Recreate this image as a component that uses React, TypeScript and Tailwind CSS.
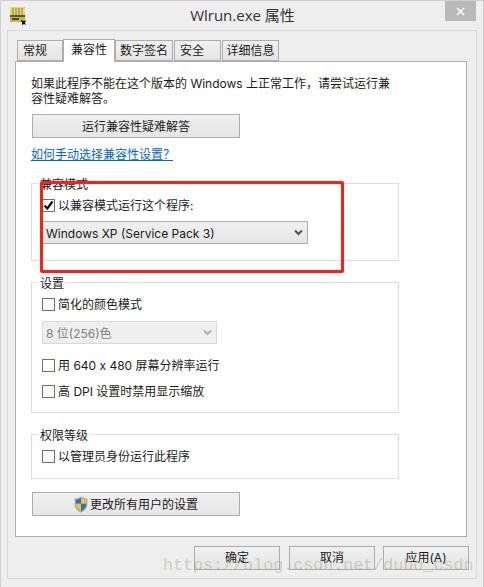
import React from 'react';

const fontStack = { fontFamily: 'Inter, "Noto Sans CJK SC", sans-serif' };

const tabs = [
    { label: '常规', cls: 'w-[46px] ml-[1px] justify-start pl-[5px]' },
    { label: '兼容性', cls: 'w-[52px] justify-center', active: true },
    { label: '数字签名', cls: 'w-[58px] justify-center' },
    { label: '安全', cls: 'w-[47px] ml-[1px] justify-start pl-[5px]' },
    { label: '详细信息', cls: 'w-[57px] ml-[1px] justify-center' },
];

const AppIcon = () => (
    <svg width="17" height="18" viewBox="0 0 17 18" className="block">
        <rect x="0" y="0" width="15" height="15" fill="#e8e04a" />
        <rect x="2" y="1" width="2" height="7" fill="#7fc06a" />
        <rect x="5" y="1" width="2" height="7" fill="#e88a8a" />
        <rect x="8" y="1" width="2" height="7" fill="#8ab86a" />
        <rect x="11" y="1" width="2" height="7" fill="#e88a8a" />
        <rect x="0" y="8" width="15" height="2" fill="#555" />
        <rect x="0" y="10" width="15" height="5" fill="#c8b838" />
        <rect x="2" y="11" width="7" height="2" fill="#444" />
        <path d="M11 13l3 1 2-1-1 3 1 2-2-1-2 1 0-2z" fill="#111" />
    </svg>
);

const ShieldIcon = () => (
    <svg width="14" height="17" viewBox="0 0 14 17" className="block">
        <path d="M7 .5C5 2 3 2.500 .7 2.500V8.500C.7 12 3.500 15 7 16.500 10.500 15 13.300 12 13.300 8.500V2.500C11 2.500 9 2 7 .5Z" fill="#9aa4ae" />
        <path d="M7 2C5.500 3 3.800 3.600 2 3.700V7.800H7Z" fill="#2f6fc4" />
        <path d="M7 2C8.500 3 10.200 3.600 12 3.700V7.800H7Z" fill="#f2c530" />
        <path d="M2 7.800H7V15C4.200 13.600 2 11.200 2 8.500Z" fill="#f2c530" />
        <path d="M12 7.800H7V15C9.800 13.600 12 11.200 12 8.500Z" fill="#2f6fc4" />
    </svg>
);

const Chevron = ({ color }: { color: string }) => (
    <svg width="9" height="7" viewBox="0 0 9 7" className="block">
        <path d="M1 1.500L4.500 5 8 1.500" fill="none" stroke={color} strokeWidth="2" />
    </svg>
);

const Checkbox = ({ label, checked, className }: { label: string; checked?: boolean; className?: string }) => (
    <div className={`flex items-center h-[14px] ${className ?? ''}`}>
        <div className="w-[13px] h-[13px] border border-[#707070] bg-white flex items-center justify-center shrink-0">
            {checked && (
                <svg width="11" height="11" viewBox="0 0 11 11" className="block">
                    <path d="M1.500 5.500L4.300 8.500 9.500 1.500" fill="none" stroke="#111" strokeWidth="2.200" />
                </svg>
            )}
        </div>
        <span className="ml-[3px] pt-[2px] whitespace-nowrap">{label}</span>
    </div>
);

const Group = ({ title, className, children }: { title: string; className: string; children: React.ReactNode }) => (
    <fieldset className={`border border-[#dcdcdc] ml-[15px] w-[368px] px-[10px] ${className}`}>
        <legend className="ml-[-4px] px-[2px] leading-[17px] h-[14px]">{title}</legend>
        {children}
    </fieldset>
);

const PushButton = ({ children, className }: { children: React.ReactNode; className: string }) => (
    <div className={`flex items-center justify-center border border-[#adadad] bg-gradient-to-b from-[#f0f0f0] to-[#e5e5e5] ${className}`}>
        {children}
    </div>
);

export default function App() {
    return (
        <div className="relative w-[484px] h-[587px] overflow-hidden bg-[#eeeeee] border-t border-x border-[#d0d0d0] text-[12px] text-[#1a1a1a]" style={fontStack}>
            <header className="relative flex items-center justify-center h-[29px]">
                <div className="absolute left-[9px] top-[6px]"><AppIcon /></div>
                <h1 className="text-[15px] font-normal text-[#333] pl-[1px]" style={{ fontFamily: '"Open Sans", "Noto Sans CJK SC", sans-serif' }}>Wlrun.exe 属性</h1>
                <div className="absolute right-[7px] top-0 w-[31px] h-[20px] bg-[#b9b9b9] flex items-center justify-center">
                    <svg width="9" height="9" viewBox="0 0 9 9" className="block">
                        <path d="M1 1L8 8M8 1L1 8" stroke="#fff" strokeWidth="1.600" />
                    </svg>
                </div>
            </header>

            <div className="ml-[6px] w-[470px] h-[549px] border border-[#d8d8d8] pt-[8px] px-[7px]">
                <div className="flex items-end h-[22px] relative z-10 ml-[1px]">
                    {tabs.map((t) => (
                        <div
                            key={t.label}
                            className={
                                t.active
                                    ? `${t.cls} h-[23px] pb-[3px] flex items-center bg-white border border-b-0 border-[#adadad] -mb-[1px]`
                                    : `${t.cls} h-[21px] flex items-center bg-gradient-to-b from-[#f0f0f0] to-[#e5e5e5] border border-[#adadad]`
                            }
                        >
                            {t.label}
                        </div>
                    ))}
                </div>

                <main className="w-[452px] h-[476px] border border-[#adadad] bg-white">
                    <p className="ml-[15px] mt-[14px] w-[366px] leading-[15px]">
                        如果此程序不能在这个版本的 Windows 上正常工作，请尝试运行兼容性疑难解答。
                    </p>
                    <PushButton className="ml-[16px] mt-[8px] w-[208px] h-[24px] pt-[2px]">运行兼容性疑难解答</PushButton>
                    <a className="block ml-[15px] mt-[9px] leading-[15px] text-[#0066cc] underline w-fit">如何手动选择兼容性设置<span className="tracking-[-2px]">？</span></a>

                    <Group title="兼容模式" className="mt-[14px] h-[85px]">
                        <Checkbox label="以兼容模式运行这个程序:" checked className="mt-[8px]" />
                        <div className="mt-[9px] w-[266px] h-[23px] border border-[#adadad] bg-gradient-to-b from-[#f0f0f0] to-[#e5e5e5] flex items-center justify-between pl-[3px] pr-[4px]">
                            <span className="pt-[2px]">Windows XP (Service Pack 3)</span>
                            <Chevron color="#555" />
                        </div>
                    </Group>

                    <Group title="设置" className="mt-[14px] h-[138px]">
                        <Checkbox label="简化的颜色模式" className="mt-[8px]" />
                        <div className="mt-[10px] w-[175px] h-[23px] border border-[#d9d9d9] bg-[#efefef] text-[#808080] flex items-center justify-between pl-[3px] pr-[4px]">
                            <span className="pt-[2px]">8 位(256)色</span>
                            <Chevron color="#b0b0b0" />
                        </div>
                        <Checkbox label="用 640 x 480 屏幕分辨率运行" className="mt-[14px]" />
                        <Checkbox label="高 DPI 设置时禁用显示缩放" className="mt-[12px]" />
                    </Group>

                    <Group title="权限等级" className="mt-[14px] h-[52px]">
                        <Checkbox label="以管理员身份运行此程序" className="mt-[8px]" />
                    </Group>

                    <PushButton className="ml-[16px] mt-[13px] w-[208px] h-[24px]">
                        <ShieldIcon />
                        <span className="ml-[2px] pt-[2px]">更改所有用户的设置</span>
                    </PushButton>
                </main>

                <div className="flex mt-[9px] ml-[179px] gap-[8px]">
                    <PushButton className="w-[86px] h-[24px]">确定</PushButton>
                    <PushButton className="w-[86px] h-[24px] ml-[1px]">取消</PushButton>
                    <PushButton className="w-[86px] h-[24px]">应用(A)</PushButton>
                </div>
            </div>

            {/* annotation drawn over the dialog */}
            <div className="absolute left-[39px] top-[180px] w-[304px] h-[92px] border-[3px] border-[#fb2015] rounded-[2px]" />

            {/* csdn watermark */}
            <div className="absolute left-[162px] top-[555px] text-[16.7px] leading-[20px] text-[#a8a294]/45 whitespace-nowrap" style={{ fontFamily: '"Liberation Mono", monospace' }}>
                https://blog.csdn.net/dubo_csdn
            </div>
        </div>
    );
}
